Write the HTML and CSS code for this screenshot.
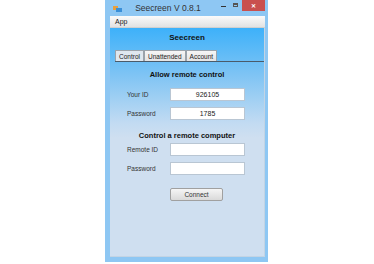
FILE: index.html
```html
<!DOCTYPE html>
<html lang="en">
<head>
    <meta charset="UTF-8">
    <title>Seecreen V 0.8.1</title>
    <link rel="stylesheet" href="styles.css">
</head>
<body>
    <div class="window">
        <div class="title-bar">
            <svg class="app-icon" width="9" height="6" viewBox="0 0 9 6">
                <rect x="0" y="0" width="5" height="4" fill="#e8a040"/>
                <rect x="3" y="2" width="6" height="4" fill="#3a8fd8"/>
            </svg>
            <div class="title-text">Seecreen V 0.8.1</div>
            <div class="title-buttons">
                <span class="btn-min"></span>
                <span class="btn-max"></span>
                <span class="btn-close">&#x2715;</span>
            </div>
        </div>
        <div class="client">
            <div class="menu-bar"><span class="menu-item">App</span></div>
            <div class="panel">
                <div class="app-name">Seecreen</div>
                <div class="tabs">
                    <span class="tab active">Control</span>
                    <span class="tab">Unattended</span>
                    <span class="tab">Account</span>
                </div>
                <div class="tab-page">
                    <div class="section-title">Allow remote control</div>
                    <div class="field-row">
                        <span class="field-label">Your ID</span>
                        <span class="field-box">926105</span>
                    </div>
                    <div class="field-row">
                        <span class="field-label">Password</span>
                        <span class="field-box">1785</span>
                    </div>
                    <div class="section-title second">Control a remote computer</div>
                    <div class="field-row">
                        <span class="field-label">Remote ID</span>
                        <span class="field-box"></span>
                    </div>
                    <div class="field-row">
                        <span class="field-label">Password</span>
                        <span class="field-box"></span>
                    </div>
                    <div class="button-row">
                        <span class="connect-btn">Connect</span>
                    </div>
                </div>
            </div>
        </div>
    </div>
</body>
</html>
```

FILE: styles.css
```css
body, html {
    margin: 0; padding: 0; width: 100%; height: 100%;
    background: #fff;
    font-family: 'Liberation Sans', Arial, sans-serif;
    overflow: hidden;
}

.window {
    margin-left: 105px;
    width: 163px; height: 262px;
    background: #8ec7f3;
    box-sizing: border-box;
    padding: 0 3px 5px 5px;
    display: flex; flex-direction: column;
}

.title-bar {
    height: 16px; flex: none;
    display: flex; align-items: center;
}
.app-icon { margin-left: 3px; margin-top: 2px; }
.title-text {
    flex: 1; text-align: center;
    font-size: 8.5px; color: #333;
    padding-right: 4px;
}
.title-buttons { display: flex; align-self: flex-start; height: 11px; }
.btn-min, .btn-max { width: 12px; position: relative; }
.btn-min::after {
    content: ''; position: absolute; left: 3px; top: 6px;
    width: 5px; height: 1px; background: #333;
}
.btn-max::after {
    content: ''; position: absolute; left: 3px; top: 3px;
    width: 5px; height: 4px; border: 1px solid #555; border-top-width: 2px;
    box-sizing: border-box;
}
.btn-close {
    width: 23px; background: #c9504e; color: #fff;
    font-size: 6px; font-weight: bold;
    display: flex; align-items: center; justify-content: center;
}

.client {
    flex: 1; display: flex; flex-direction: column;
    background: #cfdff0;
}

.menu-bar {
    height: 12px; flex: none;
    background: linear-gradient(to bottom, #fbfbfb, #e2e2e2);
    border-bottom: 1px solid #d0d0d0;
    box-sizing: border-box;
    font-size: 7px; color: #222;
    display: flex; align-items: center;
}
.menu-item { padding-left: 5px; }

.panel {
    flex: 1;
    background: linear-gradient(to bottom, #3db1fa 0px, #7cc3f4 45px, #c2dbf2 95px, #cfdff0 110px);
    display: flex; flex-direction: column;
    border-right: 1px solid #c3d4e4; border-bottom: 1px solid #c3d4e4;
}

.app-name {
    text-align: center; font-weight: bold;
    font-size: 8px; color: #111;
    margin-top: 5px; height: 10px;
}

.tabs {
    display: flex; margin-top: 7px; margin-left: 5px;
    height: 11px;
    border-bottom: 1px solid #4a5b6a;
}
.tab {
    font-size: 6.5px; color: #222;
    border: 1px solid #9aa3ab; border-bottom: none;
    background: linear-gradient(to bottom, #f6f6f6, #e4e4e4);
    padding: 0 3px;
    display: flex; align-items: center;
    border-radius: 1px 1px 0 0;
}
.tab.active { background: #dfe7ef; }

.tab-page { display: flex; flex-direction: column; }

.section-title {
    text-align: center; font-weight: bold;
    font-size: 7.5px; color: #111;
    margin-top: 8px; margin-bottom: 9px;
}
.section-title.second { margin-top: 5px; margin-bottom: 3px; }

.field-row {
    display: flex; align-items: center;
    height: 13px; margin-bottom: 6px;
}
.field-label {
    width: 43px; padding-left: 17px;
    font-size: 6.5px; color: #333;
}
.field-box {
    width: 75px; height: 13px; box-sizing: border-box;
    background: #fff; border: 1px solid #b9c6d3;
    font-size: 7px; color: #222;
    display: flex; align-items: center; justify-content: center;
}

.button-row { margin-top: 7px; padding-left: 60px; }
.connect-btn {
    width: 53px; height: 13px; box-sizing: border-box;
    border: 1px solid #a0a0a0; border-radius: 2px;
    background: linear-gradient(to bottom, #f5f5f5, #dadada);
    font-size: 6.5px; color: #333;
    display: flex; align-items: center; justify-content: center;
}
```
